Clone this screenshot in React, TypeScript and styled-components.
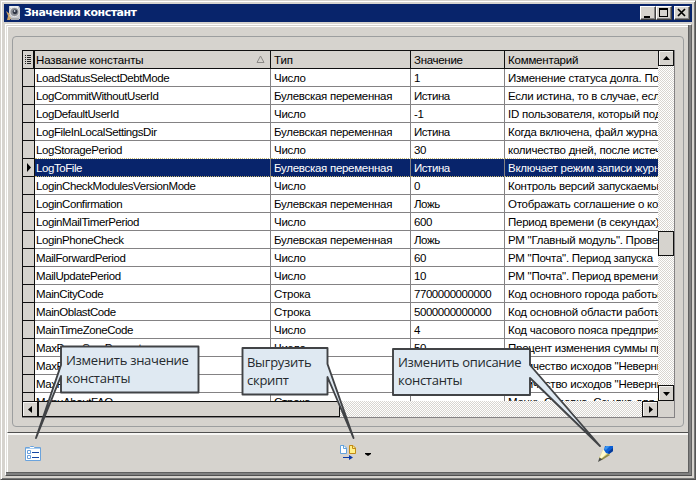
import React from 'react';
import styled, { createGlobalStyle } from 'styled-components';

const face = '#d6d3ce';
const navy = '#08246b';

const Global = createGlobalStyle`
  * { box-sizing: border-box; }
  body { margin: 0; background: ${face}; }
`;

const Window = styled.main`
  position: relative;
  width: 696px;
  height: 480px;
  padding: 2px 1px 1px;
  overflow: hidden;
  background: ${face};
  border: 1px solid;
  border-color: #d6d3ce #555555 #505050 #d6d3ce;
  box-shadow: inset 1px 1px #fff, inset -1px -1px #777;
  display: flex;
  flex-direction: column;
`;

const TitleBar = styled.header`
  height: 18px;
  flex: none;
  margin: 1px 2px 0;
  padding: 0 2px;
  display: flex;
  align-items: center;
  background: ${navy};
  color: #fff;
`;

const Title = styled.h1`
  flex: 1;
  margin: 0 0 0 3px;
  font: bold 11px/18px 'DejaVu Sans', sans-serif;
  letter-spacing: -0.5px;
  white-space: nowrap;
`;

const CaptionButton = styled.button<{ $gap?: boolean }>`
  width: 16px;
  height: 14px;
  padding: 0;
  margin: 0 0 0 ${p => (p.$gap ? 2 : 0)}px;
  border: 1px solid;
  border-color: #fff #404040 #404040 #fff;
  box-shadow: inset -1px -1px #848284;
  background: ${face};
  display: flex;
  svg { display: block; }
`;

const Client = styled.div`
  flex: 1;
  margin: 2px 2px 2px 3px;
  border: 1px solid;
  border-color: #fff #606060 #505050 #fff;
  box-shadow: inset -2px -2px #808080, inset -3px -3px #606060, inset 1px 0 #e2e0dc;
  padding: 1px 3px 3px 1px;
  display: flex;
  flex-direction: column;
`;

const Sheet = styled.section`
  height: 406px;
  flex: none;
  padding: 9px 4px 5px 4px;
  border-left: 1px solid #fff;
  border-top: 1px solid #fff;
`;

const Group = styled.div`
  width: 672px;
  height: 391px;
  border: 1px solid #9c9e9f;
  border-radius: 4px;
  padding: 13px 8px 8px 9px;
`;

const Toolbar = styled.footer`
  flex: 1;
  border-top: 1px solid #505050;
  border-left: 1px solid #fff;
  box-shadow: inset 0 2px #f8f7f5;
  display: flex;
  padding: 12px 0 0 16px;
`;

const ToolButton = styled.button<{ $left?: number }>`
  display: flex;
  flex: none;
  height: 18px;
  padding: 0;
  margin: 0 0 0 ${p => p.$left ?? 0}px;
  border: 0;
  background: none;
`;

const Grid = styled.div`
  width: 653px;
  height: 368px;
  display: grid;
  grid-template-columns: 636px 16px;
  grid-template-rows: 351px 16px;
  border-right: 1px solid #848284;
  border-bottom: 1px solid #848284;
`;

const Table = styled.div`
  overflow: hidden;
  border-left: 1px solid #101010;
  border-top: 1px solid #101010;
`;

const Row = styled.div<{ $head?: boolean; $selected?: boolean }>`
  display: grid;
  grid-template-columns: 12px 236px 140px 94px 153px;
  height: 18px;
  color: ${p => (p.$selected ? '#fff' : '#000')};
  background: ${p => (p.$head ? face : p.$selected ? navy : '#fff')};
`;

const Mark = styled.div<{ $head?: boolean }>`
  background: ${face};
  border-right: ${p => (p.$head ? 2 : 1)}px solid #101010;
  border-bottom: 1px solid #101010;
  display: flex;
  align-items: center;
  justify-content: center;
`;

const Cell = styled.div<{ $head?: boolean; $dotted?: boolean; $track: number }>`
  overflow: hidden;
  white-space: pre;
  height: 18px;
  padding: 1px 0 0 1px;
  border-right: 1px solid ${p => (p.$head ? '#101010' : '#848284')};
  border-bottom: 1px ${p => (p.$dotted ? 'dotted #c8b870' : p.$head ? 'solid #101010' : 'solid #848284')};
  font: 11.5px/17px 'Liberation Sans', Arial, sans-serif;
  letter-spacing: ${p => p.$track}px;
  display: flex;
  &:last-child { border-right: 0; }
  & + & { padding-left: 3px; }
`;

const SortMark = styled.svg`
  margin: 3px 5px 0 auto;
`;

const hatch = 'repeating-conic-gradient(#fff 0 25%, #d8d5d0 0 50%) 0 0 / 2px 2px';

const VerticalBar = styled.div`
  background: ${hatch};
  display: flex;
  flex-direction: column;
`;

const HorizontalBar = styled.div`
  background: ${hatch};
  display: flex;
`;

const ScrollButton = styled.button`
  width: 16px;
  height: 16px;
  flex: none;
  padding: 0;
  background: ${face};
  border: 1px solid #101010;
  box-shadow: inset 1px 1px #f4f3f1;
  display: flex;
  align-items: center;
  justify-content: center;
`;

const Thumb = styled.div<{ $vertical?: boolean }>`
  flex: none;
  width: ${p => (p.$vertical ? '16px' : '302px')};
  height: ${p => (p.$vertical ? '25px' : '16px')};
  border: 1px solid #101010;
  background: ${face};
`;

const Space = styled.div<{ $size?: number }>`
  flex: ${p => (p.$size ? `0 0 ${p.$size}px` : 1)};
`;

const Corner = styled.div`
  background: ${face};
`;

const CalloutLayer = styled.svg`
  position: absolute;
  left: -1px;
  top: -1px;
  pointer-events: none;
`;

const CalloutText = styled.div<{ $x: number; $y: number }>`
  position: absolute;
  left: ${p => p.$x}px;
  top: ${p => p.$y}px;
  font: 13px/18px 'Open Sans', sans-serif;
  letter-spacing: -0.28px;
  color: #252a2e;
  white-space: pre;
`;

const rows: [string, string, string, string][] = [
  ['LoadStatusSelectDebtMode', 'Число', '1', 'Изменение статуса долга. Пос'],
  ['LogCommitWithoutUserId', 'Булевская переменная', 'Истина', 'Если истина, то в случае, если'],
  ['LogDefaultUserId', 'Число', '-1', 'ID пользователя, который под'],
  ['LogFileInLocalSettingsDir', 'Булевская переменная', 'Истина', 'Когда включена, файл журнала'],
  ['LogStoragePeriod', 'Число', '30', 'количество дней, после истече'],
  ['LogToFile', 'Булевская переменная', 'Истина', 'Включает режим записи журна'],
  ['LoginCheckModulesVersionMode', 'Число', '0', 'Контроль версий запускаемых'],
  ['LoginConfirmation', 'Булевская переменная', 'Ложь', 'Отображать соглашение о ко'],
  ['LoginMailTimerPeriod', 'Число', '600', 'Период времени (в секундах)'],
  ['LoginPhoneCheck', 'Булевская переменная', 'Ложь', 'РМ "Главный модуль". Прове'],
  ['MailForwardPeriod', 'Число', '60', 'РМ "Почта". Период запуска'],
  ['MailUpdatePeriod', 'Число', '10', 'РМ "Почта". Период времени'],
  ['MainCityCode', 'Строка', '7700000000000', 'Код основного города работы'],
  ['MainOblastCode', 'Строка', '5000000000000', 'Код основной области работы'],
  ['MainTimeZoneCode', 'Число', '4', 'Код часового пояса предприят'],
  ['MaxPromSumPercent', 'Число', '50', 'Процент изменения суммы пр'],
  ['MaxPhoneWrong', 'Число', '3', 'Количество исходов "Неверны'],
  ['MaxPostWrong', 'Число', '3', 'Количество исходов "Неверны'],
  ['MenuAboutFAQ', 'Строка', '', "Меню. Справка. Ссылка для F"],
];

const tracks = [-0.42, -0.28, -0.45, -0.25];

const Arrow = ({ d }: { d: string }) => (
  <svg width="9" height="9" viewBox="0 0 9 9"><path d={d} fill="#000" /></svg>
);

const AppIcon = () => (
  <svg width="15" height="16" viewBox="0 0 15 16">
    <path d="M3 1h10l1 2v11H3z" fill="#c6c9cf" />
    <path d="M4 1h8v2H4z" fill="#eceef0" />
    <circle cx="8.5" cy="7" r="4.6" fill="#8a8e96" stroke="#e9e9e9" />
    <circle cx="9" cy="6.8" r="2.4" fill="#2f3543" />
    <circle cx="8.6" cy="6" r="0.9" fill="#c9d2de" />
    <path d="M0 6l4 3-1 2 2 2-1 2H1l1-4z" fill="#cda366" />
    <path d="M5 13h8v2H5z" fill="#a6a9ae" />
  </svg>
);

const ListIcon = () => (
  <svg width="17" height="17" viewBox="0 0 17 17">
    <path d="M1.500 2.500h4l1-1h3l1 1h6v13h-15z" fill="#fff" stroke="#6ba3dc" />
    <path d="M2 3.500h14" stroke="#a8cdf0" />
    <path d="M3.500 5.500h3v3h-3zM3.500 10.500h3v3h-3z" fill="#fff" stroke="#6a9edb" />
    <path d="M8 7.500h7M8 12.500h7" stroke="#1747a4" />
  </svg>
);

const ExportIcon = () => (
  <svg width="17" height="16" viewBox="0 0 17 16">
    <path d="M1.500 .5h3.500l2.500 2.500v5.500h-6z" fill="#fff" stroke="#63a2dc" />
    <path d="M4.500 .5v3h3" fill="none" stroke="#63a2dc" />
    <path d="M10.500 .5H14l2.500 2.500v5.500h-6z" fill="#fff08a" stroke="#c28b16" />
    <path d="M13.500 .5v3h3" fill="none" stroke="#c28b16" />
    <path d="M4 12.500h8" stroke="#0838a8" />
    <path d="M10 10l4 2.500L10 15z" fill="#0838a8" />
  </svg>
);

const PencilIcon = () => (
  <svg width="17" height="17" viewBox="0 0 17 17">
    <path d="M6 5L2 13l3 2 8-5-2-4z" fill="#e5dc76" />
    <path d="M6 5L3 12l1 2 6-6-2-3z" fill="#fffbd0" />
    <path d="M13 10l-8 5-1-1 7-5z" fill="#8d8a52" />
    <path d="M2.500 12.500L1 17l4.500-2.500z" fill="#4c4f4a" />
    <path d="M8 1h8v5l-4 3-3-1-2-3z" fill="#0b5fd6" />
    <path d="M9 1h4l-4 4-2-1z" fill="#3b93ee" />
    <path d="M16 3v3l-4 3-1-2z" fill="#073b98" />
  </svg>
);

export default function App() {
  return (
    <>
      <Global />
      <Window>
        <TitleBar>
          <AppIcon />
          <Title>Значения констант</Title>
          <CaptionButton><svg width="14" height="12"><path d="M3 9h6v2H3z" /></svg></CaptionButton>
          <CaptionButton><svg width="14" height="12"><path d="M2 1h9v9H2zM3 3v6h7V3z" fillRule="evenodd" /></svg></CaptionButton>
          <CaptionButton $gap><svg width="14" height="12"><path d="M3 2l7 7M10 2L3 9" stroke="#000" strokeWidth="1.700" /></svg></CaptionButton>
        </TitleBar>
        <Client>
          <Sheet>
            <Group>
              <Grid>
                <Table>
                  <Row $head>
                    <Mark $head>
                      <svg width="8" height="11"><path d="M1 1.500h1M3 1.500h4M1 3.500h1M3 3.500h4M1 5.500h1M3 5.500h4M1 7.500h1M3 7.500h4M1 9.500h1M3 9.500h4" stroke="#222" /></svg>
                    </Mark>
                    <Cell $head $track={-0.12}>
                      Название константы
                      <SortMark width="9" height="9"><path d="M4.500 1L8 7.500H1z" fill="none" stroke="#8b8986" /></SortMark>
                    </Cell>
                    <Cell $head $track={-0.12}>Тип</Cell>
                    <Cell $head $track={-0.3}>Значение</Cell>
                    <Cell $head $track={-0.2}>Комментарий</Cell>
                  </Row>
                  {rows.map((row, i) => (
                    <Row key={row[0]} $selected={i === 5}>
                      <Mark>{i === 5 && <Arrow d="M3 0l4 4.500L3 9z" />}</Mark>
                      {row.map((text, c) => (
                        <Cell key={c} $track={tracks[c]} $dotted={i === 4 || i === 5}>{text}</Cell>
                      ))}
                    </Row>
                  ))}
                </Table>
                <VerticalBar>
                  <ScrollButton><Arrow d="M1 6h7L4.500 2z" /></ScrollButton>
                  <Space $size={165} />
                  <Thumb $vertical />
                  <Space />
                  <ScrollButton><Arrow d="M1 3h7L4.500 7z" /></ScrollButton>
                </VerticalBar>
                <HorizontalBar>
                  <ScrollButton><Arrow d="M6 1v7L2 4.500z" /></ScrollButton>
                  <Thumb />
                  <Space />
                  <ScrollButton><Arrow d="M3 1v7l4-3.500z" /></ScrollButton>
                </HorizontalBar>
                <Corner />
              </Grid>
            </Group>
          </Sheet>
          <Toolbar>
            <ToolButton><ListIcon /></ToolButton>
            <ToolButton $left={298}><ExportIcon /></ToolButton>
            <ToolButton $left={8}><svg width="7" height="17"><path d="M1 8h6v1L4 11 1 9z" /></svg></ToolButton>
            <ToolButton $left={226}><PencilIcon /></ToolButton>
          </Toolbar>
        </Client>
        <CalloutLayer width="696" height="480">
          <g fill="#dfe9f2" stroke="#414346" strokeWidth="1.900" strokeLinejoin="round">
            <path d="M61 346.500H198.500V392.500H61V376L36 438 61 365z" />
            <path d="M242.500 348H327.500V364L353.500 438 327.500 377V394.500H242.500z" />
            <path d="M393 349H530V365L600 446 530 378V395H393z" />
          </g>
        </CalloutLayer>
        <CalloutText $x={65} $y={350}>{'Изменить значение\nконстанты'}</CalloutText>
        <CalloutText $x={246} $y={352}>{'Выгрузить\nскрипт'}</CalloutText>
        <CalloutText $x={397} $y={352}>{'Изменить описание\nконстанты'}</CalloutText>
      </Window>
    </>
  );
}
